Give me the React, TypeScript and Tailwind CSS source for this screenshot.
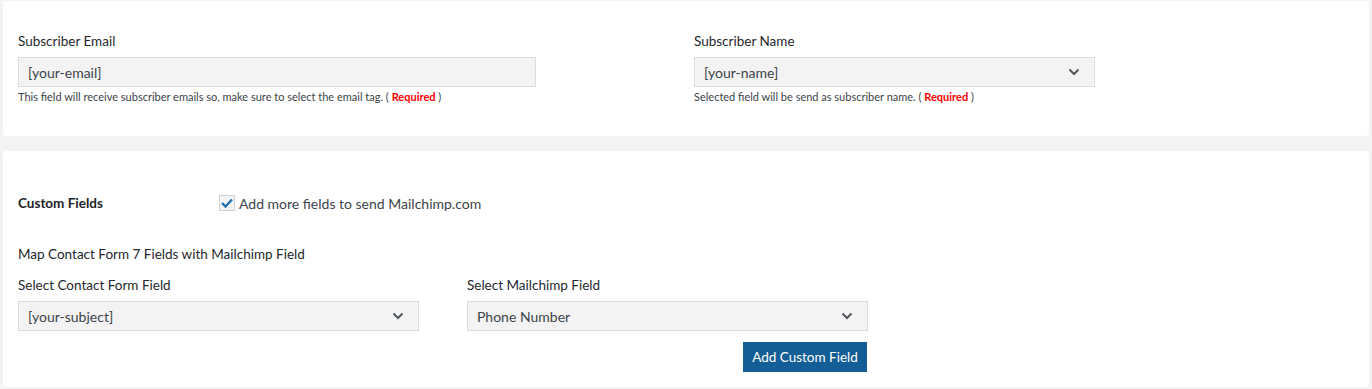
import React from 'react';

function Chevron() {
  return (
    <svg width="12" height="8" viewBox="0 0 12 8" className="shrink-0">
      <path d="M1.5 1.5 L6 6 L10.5 1.5" fill="none" stroke="#50575e" strokeWidth="2" />
    </svg>
  );
}

function SelectBox({ value, width }: { value: string; width: string }) {
  return (
    <div className={`${width} h-[30px] bg-[#f3f3f3] border border-[#dcdcde] flex items-center justify-between pl-[9px] pr-[14px] text-[14px] text-[#3c434a]`}>
      <span>{value}</span>
      <Chevron />
    </div>
  );
}

function Required() {
  return (
    <>
      ( <span className="text-[#ff0000] font-bold">Required</span> )
    </>
  );
}

function Label({ children }: { children: React.ReactNode }) {
  return <div className="text-[13.5px] leading-[18px] text-[#23282d]">{children}</div>;
}

export default function App() {
  return (
    <div className="w-[1372px] h-[389px] bg-[#f3f3f3] pt-px px-[3px] font-['Lato',sans-serif] text-[#3c434a]">
      <div className="bg-white rounded-[3px] h-[135px] pt-[31px] px-[15px] flex">
        <div className="w-[676px]">
          <Label>Subscriber Email</Label>
          <div className="mt-[7px] w-[518px] h-[30px] bg-[#f3f3f3] border border-[#dcdcde] flex items-center pl-[9px] text-[14px]">
            [your-email]
          </div>
          <div className="mt-[2px] text-[11px] leading-[16px]">
            This field will receive subscriber emails so, make sure to select the email tag. <Required />
          </div>
        </div>
        <div>
          <Label>Subscriber Name</Label>
          <div className="mt-[7px]">
            <SelectBox value="[your-name]" width="w-[401px]" />
          </div>
          <div className="mt-[2px] text-[11px] leading-[16px]">
            Selected field will be send as subscriber name. <Required />
          </div>
        </div>
      </div>

      <div className="mt-[15px] bg-white rounded-[3px] h-[236px] pt-[42px] px-[15px]">
        <div className="flex items-center h-[20px]">
          <div className="w-[201px] text-[13.5px] font-bold text-[#1d2327]">Custom Fields</div>
          <div className="flex items-center gap-[4px]">
            <div className="w-[16px] h-[16px] border border-[#d0d0d0] bg-[#f3f3f3] flex items-center justify-center">
              <svg width="12" height="10" viewBox="0 0 12 10">
                <path d="M1 5 L4.5 8.5 L11 1.5" fill="none" stroke="#2271b1" strokeWidth="2.4" />
              </svg>
            </div>
            <span className="text-[14px] text-[#3c434a]">Add more fields to send Mailchimp.com</span>
          </div>
        </div>
        <div className="mt-[32px]">
          <Label>Map Contact Form 7 Fields with Mailchimp Field</Label>
        </div>
        <div className="mt-[13px] flex gap-[48px]">
          <div>
            <Label>Select Contact Form Field</Label>
            <div className="mt-[7px]">
              <SelectBox value="[your-subject]" width="w-[401px]" />
            </div>
          </div>
          <div>
            <Label>Select Mailchimp Field</Label>
            <div className="mt-[7px]">
              <SelectBox value="Phone Number" width="w-[401px]" />
            </div>
            <div className="mt-[11px] flex justify-end">
              <button className="h-[30px] w-[124px] mr-px bg-[#135e96] text-white text-[13.5px]">Add Custom Field</button>
            </div>
          </div>
        </div>
      </div>
    </div>
  );
}
